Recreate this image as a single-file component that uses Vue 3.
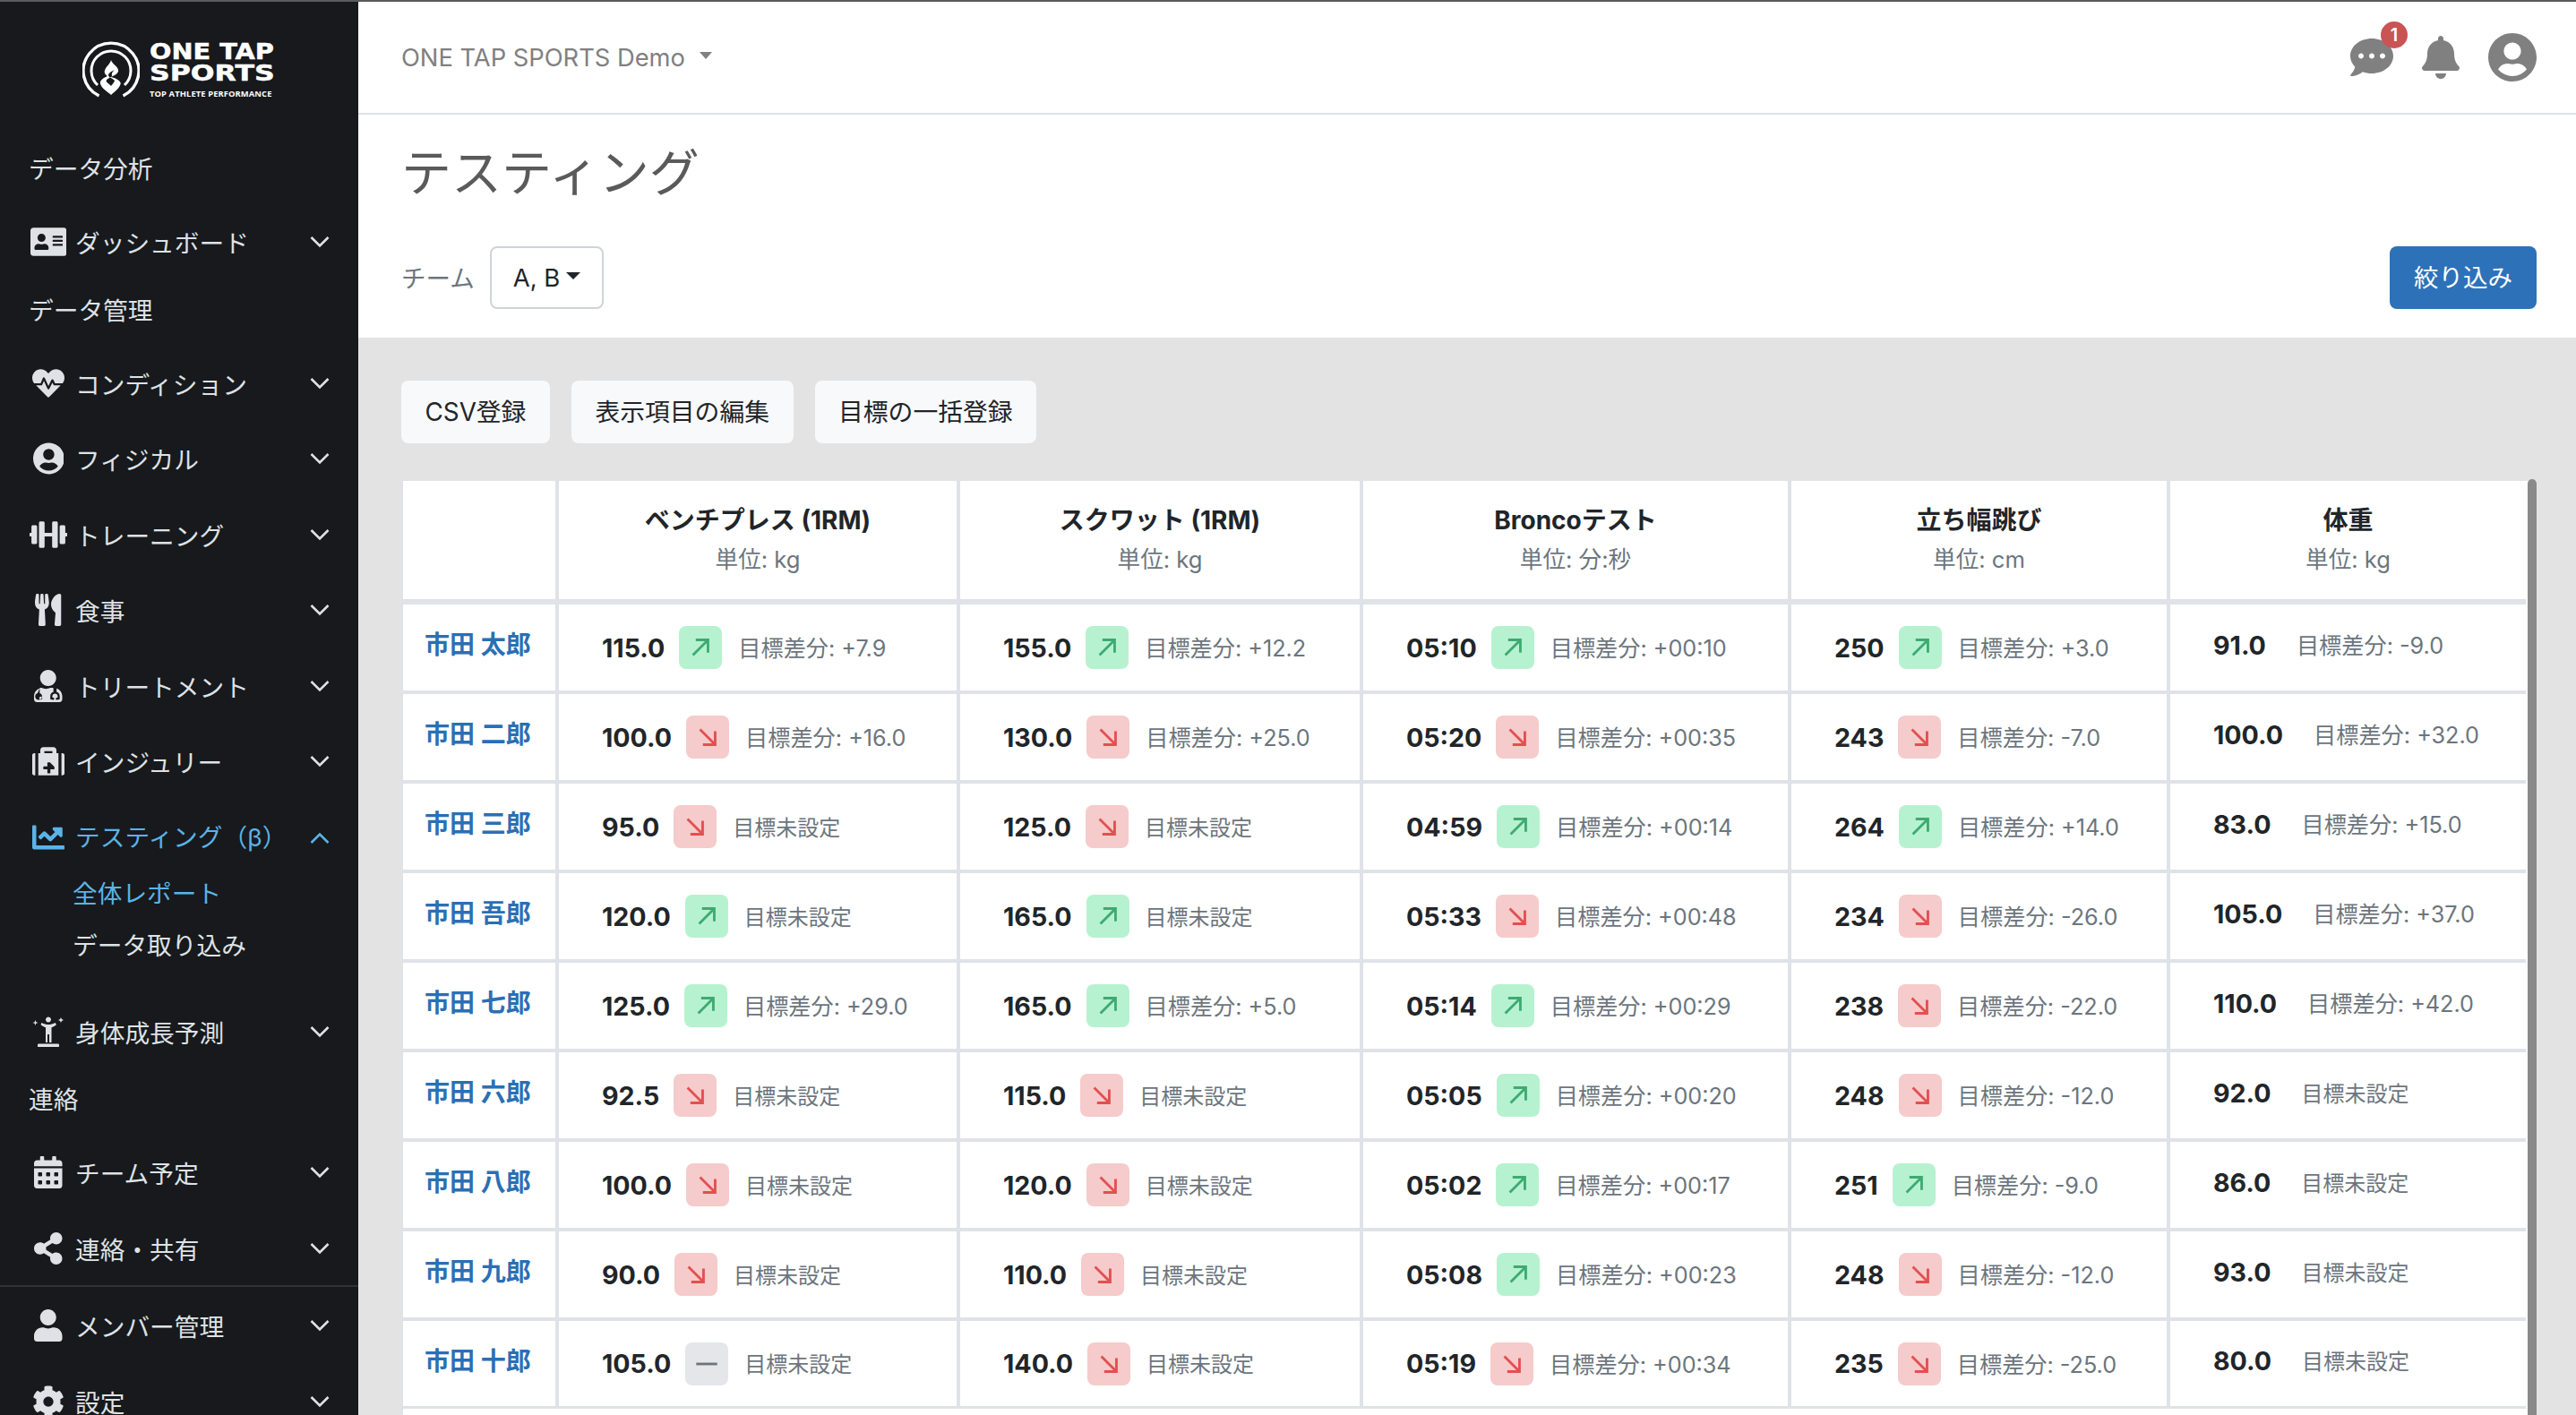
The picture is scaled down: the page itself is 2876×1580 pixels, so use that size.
<template>
  <div class="page">
    <aside class="sidebar">
      <div class="logo">
        <svg class="logo-mark" viewBox="0 0 64 64" width="64" height="64">
          <path d="M18.500 61A31 31 0 1 1 45.500 61" fill="none" stroke="#fff" stroke-width="3.400" />
          <path d="M17 49A22 22 0 1 1 47 49" fill="none" stroke="#fff" stroke-width="3" />
          <g transform="translate(32 0) scale(1.350 1) translate(-32 0)">
            <path d="M32 21c1 5 6 7 6 12 0 3-3 5-6 7 3 1 7 3 8 7-1 6-5 9-8 13-3-4-8-7-9-13 0-4 3-6 6-8-2-2-3-4-2-7 1-4 4-6 5-11z" fill="#fff" />
            <path d="M35 32c-3 2-6 4-5 7 1 2 4 3 5 5-1 3-2 4-3 6-1-2-3-3-4-5 0-3 3-4 5-6-1-2 0-5 2-7z" fill="#17191c" />
          </g>
        </svg>
        <div class="logo-text">
          <div class="logo-line">ONE TAP</div>
          <div class="logo-line sports">SPORTS</div>
          <div class="logo-tag">TOP ATHLETE PERFORMANCE</div>
        </div>
      </div>
      <nav class="nav">
        <template v-for="item in nav" :key="item.label">
          <div v-if="item.section" class="section">{{ item.label }}</div>
          <div v-else class="nav-item" :class="{ open: item.open, last: item.last }">
            <span class="nav-icon">
              <svg :viewBox="icons[item.icon].box" height="36" :width="36 * icons[item.icon].w">
                <path :d="icons[item.icon].d" fill="currentColor" fill-rule="evenodd" />
              </svg>
            </span>
            <span class="nav-label">{{ item.label }}</span>
            <svg class="chev" viewBox="0 0 22 14" width="22" height="14">
              <path :d="item.open ? 'M1.5 12L11 2.5 20.500 12' : 'M1.5 2L11 11.500 20.500 2'" fill="none" stroke="currentColor" stroke-width="2.600" />
            </svg>
          </div>
          <div v-if="item.open" class="sub">
            <div class="sub-item active">全体レポート</div>
            <div class="sub-item">データ取り込み</div>
          </div>
          <div v-if="item.last" class="divider"></div>
        </template>
      </nav>
    </aside>

    <main class="main">
      <header class="topbar">
        <div class="org">ONE TAP SPORTS Demo<i class="org-caret"></i></div>
        <div class="top-icons">
          <span class="chat">
            <svg viewBox="0 0 512 512" width="48" height="48"><path :d="chatPath" fill="#808080" /></svg>
            <b class="badge">1</b>
          </span>
          <svg viewBox="0 0 448 512" width="42" height="48"><path :d="bellPath" fill="#808080" /></svg>
          <svg viewBox="0 0 496 512" width="54" height="56"><path :d="icons.userCircle.d" fill="#808080" /></svg>
        </div>
      </header>

      <section class="head">
        <h1 class="title">テスティング</h1>
        <div class="filter">
          <span class="filter-label">チーム</span>
          <span class="toggle">A, B<i class="toggle-caret"></i></span>
          <span class="primary">絞り込み</span>
        </div>
      </section>

      <section class="content">
        <div class="actions">
          <span class="btn">CSV登録</span>
          <span class="btn">表示項目の編集</span>
          <span class="btn">目標の一括登録</span>
        </div>
        <div class="table-wrap">
          <table class="grid">
            <colgroup>
              <col class="c0" /><col class="c1" /><col class="c2" /><col class="c3" /><col class="c4" /><col class="c5" />
            </colgroup>
            <thead>
              <tr>
                <th></th>
                <th v-for="h in headers" :key="h.title">
                  <div class="h-title">{{ h.title }}</div>
                  <div class="h-unit">{{ h.unit }}</div>
                </th>
              </tr>
            </thead>
            <tbody>
              <tr v-for="row in rows" :key="row.name">
                <td class="name-cell"><span class="name">{{ row.name }}</span></td>
                <td v-for="(c, i) in row.cells" :key="i">
                  <div class="cell" :class="{ plain: !c[1] }">
                    <span class="val">{{ c[0] }}</span>
                    <span v-if="c[1]" class="trend" :class="c[1]">
                      <svg viewBox="0 0 20 20" width="26" height="26">
                        <path :d="arrows[c[1]]" fill="none" stroke="currentColor" stroke-width="2.200" />
                      </svg>
                    </span>
                    <span class="diff" :class="{ num: c[2] }">{{ c[2] ? '目標差分: ' + c[2] : '目標未設定' }}</span>
                  </div>
                </td>
              </tr>
            </tbody>
          </table>
          <div class="thumb"></div>
        </div>
      </section>
    </main>
  </div>
</template>

<script setup>
const icons = {
  card: { box: '0 0 576 512', w: 1.125, d: 'M528 32H48C21.5 32 0 53.5 0 80v352c0 26.5 21.5 48 48 48h480c26.5 0 48-21.5 48-48V80c0-26.5-21.5-48-48-48zm-352 96c35.3 0 64 28.7 64 64s-28.7 64-64 64-64-28.7-64-64 28.7-64 64-64zm112 236.8c0 10.6-10 19.2-22.4 19.2H86.4C74 384 64 375.4 64 364.8v-19.2c0-31.8 30.1-57.6 67.2-57.6h5c12.3 5.1 25.7 8 39.8 8s27.6-2.9 39.8-8h5c37.1 0 67.2 25.8 67.2 57.6v19.2zM512 312c0 4.4-3.6 8-8 8H360c-4.4 0-8-3.6-8-8v-16c0-4.4 3.6-8 8-8h144c4.4 0 8 3.6 8 8v16zm0-64c0 4.4-3.6 8-8 8H360c-4.4 0-8-3.6-8-8v-16c0-4.4 3.6-8 8-8h144c4.4 0 8 3.6 8 8v16zm0-64c0 4.4-3.6 8-8 8H360c-4.4 0-8-3.6-8-8v-16c0-4.4 3.6-8 8-8h144c4.4 0 8 3.6 8 8v16z' },
  heart: { box: '0 0 512 512', w: 1, d: 'M320.2 243.8l-49.7 99.4c-6 12.1-23.4 11.7-28.9-.6l-56.9-126.3-30 71.7H60.6l182.5 186.5c7.1 7.3 18.6 7.3 25.7 0L451.4 288H342.3l-22.1-44.2zM473.7 73.9l-2.4-2.5c-51.5-52.6-135.8-52.6-187.4 0L256 100l-27.9-28.5c-51.5-52.7-135.9-52.7-187.4 0l-2.4 2.4C-10.4 123.7-12.5 203 31 256h102.4l35.9-86.2c5.4-12.9 23.6-13.2 29.4-.4l58.2 129.3 49-97.9c5.9-11.8 22.7-11.8 28.6 0l27.6 55.2H481c43.5-53 41.4-132.3-7.3-182.1z' },
  userCircle: { box: '0 0 496 512', w: 0.969, d: 'M248 8C111 8 0 119 0 256s111 248 248 248 248-111 248-248S385 8 248 8zm0 96c48.6 0 88 39.4 88 88s-39.4 88-88 88-88-39.4-88-88 39.4-88 88-88zm0 344c-58.7 0-111.3-26.6-146.5-68.2 18.8-35.4 55.6-59.8 98.5-59.8 2.4 0 4.8.4 7.1 1.1 13 4.2 26.6 6.9 40.9 6.9 14.3 0 28-2.7 40.9-6.9 2.3-.7 4.7-1.1 7.1-1.1 42.9 0 79.7 24.4 98.5 59.8C359.3 421.4 306.7 448 248 448z' },
  dumbbell: { box: '0 0 640 512', w: 1.25, d: 'M104 96H56c-13.3 0-24 10.7-24 24v104H8c-4.4 0-8 3.6-8 8v48c0 4.4 3.6 8 8 8h24v104c0 13.3 10.7 24 24 24h48c13.3 0 24-10.7 24-24V120c0-13.3-10.7-24-24-24zm528 128h-24V120c0-13.3-10.7-24-24-24h-48c-13.3 0-24 10.7-24 24v272c0 13.3 10.7 24 24 24h48c13.3 0 24-10.7 24-24V288h24c4.4 0 8-3.6 8-8v-48c0-4.4-3.600-8-8-8zM456 32h-48c-13.3 0-24 10.7-24 24v168H256V56c0-13.3-10.7-24-24-24h-48c-13.3 0-24 10.7-24 24v400c0 13.3 10.7 24 24 24h48c13.3 0 24-10.7 24-24V288h128v168c0 13.3 10.7 24 24 24h48c13.3 0 24-10.7 24-24V56c0-13.3-10.7-24-24-24z' },
  utensils: { box: '0 0 416 512', w: 0.8125, d: 'M207.9 15.2c.8 4.7 16.1 94.5 16.1 128.8 0 52.3-27.8 89.6-68.9 104.6L168 486.7c.7 13.7-10.2 25.3-24 25.3H80c-13.7 0-24.7-11.5-24-25.3l12.9-238.1C27.7 233.6 0 196.2 0 144 0 109.6 15.3 19.9 16.1 15.2 19.3-5.1 61.4-5.4 64 16.3v141.2c1.3 3.4 15.1 3.2 16 0 1.4-25.3 7.9-139.2 8-141.8 3.3-20.8 44.7-20.8 47.9 0 .2 2.7 6.6 116.5 8 141.8.9 3.2 14.8 3.4 16 0V16.3c2.6-21.6 44.8-21.4 48-1.1zm119.2 285.7l-15 185.1c-1.2 14 9.9 26 23.9 26h56c13.3 0 24-10.7 24-24V24c0-13.2-10.7-24-24-24-82.5 0-221.4 178.5-64.9 300.9z' },
  doctor: { box: '0 0 448 512', w: 0.875, d: 'M224 256c70.7 0 128-57.3 128-128S294.7 0 224 0 96 57.3 96 128s57.3 128 128 128zM90 295C36 314 0 362 0 420v44c0 26.500 21.500 48 48 48h352c26.500 0 48-21.500 48-48v-44c0-58-36-106-90-125v52c30 10 50 37 50 70v40c0 7-5 13-12 14l-34 6c-8 1-12-4-13-9l-3-14c-1-6 2-10 7-11l22-4v-22c0-52-84-52-84 1v21l22 4c5 1 8 5 7 11l-3 14c-1 5-5 10-13 9l-34-6c-7-1-12-7-12-14v-40c0-33 21-60 50-70v-58c-12-3-20-4-31-4h-16c-22 10-46 16-72 16s-50-6-72-16h-16c-4 0-7 0-11 1v85c22 7 38 27 38 52 0 30-25 54-55 54s-55-24-55-54c0-25 16-45 38-52zM107 424a24 24 0 1 0 .01 0z' },
  medkit: { box: '0 0 512 512', w: 1, d: 'M96 480h320V128h-32V80c0-26.51-21.49-48-48-48H176c-26.51 0-48 21.49-48 48v48H96v352zm96-384h128v32H192V96zm160 248v32c0 4.422-3.578 8-8 8h-56v56c0 4.422-3.578 8-8 8h-32c-4.422 0-8-3.578-8-8v-56h-56c-4.422 0-8-3.578-8-8v-32c0-4.422 3.578-8 8-8h56v-56c0-4.422 3.578-8 8-8h32c4.422 0 8 3.578 8 8zM512 160v288c0 17.673-14.327 32-32 32h-16V128h16c17.673 0 32 14.327 32 32zM48 480H32c-17.673 0-32-14.327-32-32V160c0-17.673 14.327-32 32-32h16v352z' },
  chart: { box: '0 0 512 512', w: 1, d: 'M496 384H64V80c0-8.84-7.16-16-16-16H16C7.16 64 0 71.16 0 80v336c0 17.67 14.33 32 32 32h464c8.84 0 16-7.16 16-16v-32c0-8.84-7.16-16-16-16zM464 96H345.94c-21.38 0-32.09 25.85-16.97 40.97l32.4 32.4L288 242.75l-73.37-73.37c-12.5-12.5-32.76-12.5-45.25 0l-68.69 68.69c-6.25 6.25-6.25 16.38 0 22.63l22.62 22.62c6.25 6.25 16.38 6.25 22.63 0L192 237.25l73.37 73.37c12.5 12.5 32.76 12.5 45.25 0l96-96 32.4 32.4c15.12 15.12 40.97 4.41 40.97-16.97V112c.01-8.84-7.15-16-16-16z' },
  growth: { box: '0 0 36 36', w: 1, d: 'M18 1.500a3 3 0 1 1-.01 0zM10.500 8c2.500 1.500 5 2 7.500 2s5-.5 7.500-2l1.500 2c-1.800 1.700-3.500 2.700-5.500 3.200V30h-2.500v-9h-2v9H15V13.200c-2-.5-3.700-1.500-5.500-3.200zM7 31.500h22c1 0 1 1 1 2s0 1.500-1 1.500H7c-1 0-1-.5-1-1.500s0-2 1-2zM3.500 5l.8 2.200L6.500 8l-2.200.8-.8 2.200-.8-2.200L.5 8l2.200-.8zM32 2l.9 2.100L35 5l-2.100.9L32 8l-.9-2.100L29 5l2.100-.9z' },
  calendar: { box: '0 0 448 512', w: 0.875, d: 'M0 464c0 26.5 21.5 48 48 48h352c26.5 0 48-21.5 48-48V192H0v272zm320-196c0-6.6 5.4-12 12-12h40c6.6 0 12 5.4 12 12v40c0 6.6-5.4 12-12 12h-40c-6.6 0-12-5.4-12-12v-40zm0 128c0-6.6 5.4-12 12-12h40c6.6 0 12 5.4 12 12v40c0 6.6-5.4 12-12 12h-40c-6.6 0-12-5.4-12-12v-40zM192 268c0-6.6 5.4-12 12-12h40c6.6 0 12 5.4 12 12v40c0 6.6-5.4 12-12 12h-40c-6.6 0-12-5.4-12-12v-40zm0 128c0-6.6 5.4-12 12-12h40c6.6 0 12 5.4 12 12v40c0 6.6-5.4 12-12 12h-40c-6.6 0-12-5.4-12-12v-40zM64 268c0-6.6 5.4-12 12-12h40c6.6 0 12 5.4 12 12v40c0 6.6-5.4 12-12 12H76c-6.6 0-12-5.4-12-12v-40zm0 128c0-6.6 5.4-12 12-12h40c6.6 0 12 5.4 12 12v40c0 6.6-5.4 12-12 12H76c-6.6 0-12-5.4-12-12v-40zM400 64h-48V16c0-8.8-7.2-16-16-16h-32c-8.8 0-16 7.2-16 16v48H160V16c0-8.8-7.2-16-16-16h-32c-8.8 0-16 7.2-16 16v48H48C21.5 64 0 85.5 0 112v48h448v-48c0-26.5-21.5-48-48-48z' },
  share: { box: '0 0 448 512', w: 0.875, d: 'M352 320c-22.608 0-43.387 7.819-59.79 20.895l-102.486-64.054a96.551 96.551 0 0 0 0-41.683l102.486-64.054C308.613 184.181 329.392 192 352 192c53.019 0 96-42.981 96-96S405.019 0 352 0s-96 42.981-96 96c0 7.158.79 14.13 2.276 20.841L155.79 180.895C139.387 167.819 118.608 160 96 160c-53.019 0-96 42.981-96 96s42.981 96 96 96c22.608 0 43.387-7.819 59.79-20.895l102.486 64.054A96.301 96.301 0 0 0 256 416c0 53.019 42.981 96 96 96s96-42.981 96-96-42.981-96-96-96z' },
  user: { box: '0 0 448 512', w: 0.875, d: 'M224 256c70.7 0 128-57.3 128-128S294.7 0 224 0 96 57.3 96 128s57.3 128 128 128zm89.6 32h-16.7c-22.2 10.2-46.9 16-72.9 16s-50.6-5.8-72.9-16h-16.7C60.2 288 0 348.2 0 422.4V464c0 26.5 21.5 48 48 48h352c26.5 0 48-21.5 48-48v-41.6c0-74.2-60.2-134.4-134.4-134.4z' },
  cog: { box: '0 0 512 512', w: 1, d: 'M487.4 315.7l-42.6-24.6c4.3-23.2 4.3-47 0-70.2l42.6-24.6c4.9-2.8 7.1-8.6 5.5-14-11.1-35.6-30-67.8-54.7-94.6-3.8-4.1-10-5.1-14.8-2.3L380.8 110c-17.9-15.4-38.5-27.3-60.8-35.1V25.8c0-5.6-3.9-10.5-9.4-11.7-36.7-8.2-74.3-7.8-109.2 0-5.5 1.2-9.4 6.1-9.4 11.7V75c-22.2 7.9-42.8 19.8-60.8 35.1L88.7 85.5c-4.9-2.8-11-1.9-14.8 2.3-24.7 26.7-43.6 58.9-54.7 94.6-1.7 5.4.6 11.2 5.5 14L67.3 221c-4.3 23.2-4.3 47 0 70.2l-42.6 24.6c-4.9 2.8-7.1 8.6-5.5 14 11.1 35.6 30 67.8 54.7 94.6 3.8 4.1 10 5.1 14.8 2.3l42.6-24.6c17.9 15.4 38.5 27.3 60.8 35.1v49.2c0 5.6 3.9 10.5 9.4 11.7 36.7 8.2 74.3 7.8 109.2 0 5.5-1.2 9.4-6.1 9.4-11.7v-49.2c22.2-7.9 42.8-19.8 60.8-35.1l42.6 24.6c4.9 2.8 11 1.9 14.8-2.3 24.7-26.7 43.6-58.9 54.7-94.6 1.5-5.5-.7-11.3-5.6-14.1zM256 336c-44.1 0-80-35.9-80-80s35.9-80 80-80 80 35.9 80 80-35.9 80-80 80z' }
}

const chatPath = 'M256 32C114.6 32 0 125.1 0 240c0 49.6 21.4 95 57 130.7C44.5 421.1 2.7 466 2.2 466.5c-2.2 2.3-2.8 5.7-1.5 8.7S4.8 480 8 480c66.3 0 116-31.8 140.6-51.4 32.7 12.3 69 19.4 107.4 19.4 141.4 0 256-93.1 256-208S397.4 32 256 32zM128 272c-17.7 0-32-14.3-32-32s14.3-32 32-32 32 14.3 32 32-14.3 32-32 32zm128 0c-17.7 0-32-14.3-32-32s14.3-32 32-32 32 14.3 32 32-14.3 32-32 32zm128 0c-17.7 0-32-14.3-32-32s14.3-32 32-32 32 14.3 32 32-14.3 32-32 32z'
const bellPath = 'M224 512c35.32 0 63.97-28.65 63.97-64H160.03c0 35.35 28.65 64 63.97 64zm215.39-149.71c-19.32-20.76-55.47-51.99-55.47-154.29 0-77.7-54.48-139.9-127.94-155.16V32c0-17.67-14.32-32-31.98-32s-31.98 14.33-31.98 32v20.84C118.56 68.1 64.08 130.3 64.08 208c0 102.3-36.15 133.53-55.47 154.29-6 6.45-8.66 14.16-8.61 21.71.11 16.4 12.98 32 32.1 32h383.8c19.12 0 32-15.6 32.1-32 .05-7.55-2.61-15.27-8.61-21.71z'

const arrows = {
  up: 'M3.500 16.500L16 4M6 3.500h10.500v11',
  down: 'M3.500 3.500L16 16M16.500 5v11.500H6',
  flat: 'M1 10h18'
}

const nav = [
  { section: true, label: 'データ分析' },
  { label: 'ダッシュボード', icon: 'card' },
  { section: true, label: 'データ管理' },
  { label: 'コンディション', icon: 'heart' },
  { label: 'フィジカル', icon: 'userCircle' },
  { label: 'トレーニング', icon: 'dumbbell' },
  { label: '食事', icon: 'utensils' },
  { label: 'トリートメント', icon: 'doctor' },
  { label: 'インジュリー', icon: 'medkit' },
  { label: 'テスティング（β）', icon: 'chart', open: true },
  { label: '身体成長予測', icon: 'growth' },
  { section: true, label: '連絡' },
  { label: 'チーム予定', icon: 'calendar' },
  { label: '連絡・共有', icon: 'share', last: true },
  { label: 'メンバー管理', icon: 'user' },
  { label: '設定', icon: 'cog' }
]

const headers = [
  { title: 'ベンチプレス (1RM)', unit: '単位: kg' },
  { title: 'スクワット (1RM)', unit: '単位: kg' },
  { title: 'Broncoテスト', unit: '単位: 分:秒' },
  { title: '立ち幅跳び', unit: '単位: cm' },
  { title: '体重', unit: '単位: kg' }
]

const rows = [
  { name: '市田 太郎', cells: [['115.0', 'up', '+7.9'], ['155.0', 'up', '+12.2'], ['05:10', 'up', '+00:10'], ['250', 'up', '+3.0'], ['91.0', '', '-9.0']] },
  { name: '市田 二郎', cells: [['100.0', 'down', '+16.0'], ['130.0', 'down', '+25.0'], ['05:20', 'down', '+00:35'], ['243', 'down', '-7.0'], ['100.0', '', '+32.0']] },
  { name: '市田 三郎', cells: [['95.0', 'down', ''], ['125.0', 'down', ''], ['04:59', 'up', '+00:14'], ['264', 'up', '+14.0'], ['83.0', '', '+15.0']] },
  { name: '市田 吾郎', cells: [['120.0', 'up', ''], ['165.0', 'up', ''], ['05:33', 'down', '+00:48'], ['234', 'down', '-26.0'], ['105.0', '', '+37.0']] },
  { name: '市田 七郎', cells: [['125.0', 'up', '+29.0'], ['165.0', 'up', '+5.0'], ['05:14', 'up', '+00:29'], ['238', 'down', '-22.0'], ['110.0', '', '+42.0']] },
  { name: '市田 六郎', cells: [['92.5', 'down', ''], ['115.0', 'down', ''], ['05:05', 'up', '+00:20'], ['248', 'down', '-12.0'], ['92.0', '', '']] },
  { name: '市田 八郎', cells: [['100.0', 'down', ''], ['120.0', 'down', ''], ['05:02', 'up', '+00:17'], ['251', 'up', '-9.0'], ['86.0', '', '']] },
  { name: '市田 九郎', cells: [['90.0', 'down', ''], ['110.0', 'down', ''], ['05:08', 'up', '+00:23'], ['248', 'down', '-12.0'], ['93.0', '', '']] },
  { name: '市田 十郎', cells: [['105.0', 'flat', ''], ['140.0', 'down', ''], ['05:19', 'down', '+00:34'], ['235', 'down', '-25.0'], ['80.0', '', '']] }
]
</script>

<style>
html, body { margin: 0; background: #e3e3e3; }
</style>

<style scoped>
.page {
  display: flex;
  width: 2876px;
  height: 1580px;
  overflow: hidden;
  border-top: 2px solid #5a5a5e;
  box-sizing: border-box;
  font-family: Inter, "Noto Sans CJK JP", sans-serif;
  font-size: 27.5px;
  color: #212529;
}

/* sidebar */
.sidebar {
  width: 400px;
  flex: none;
  background: #17191c;
  color: #dee2e6;
  font-size: 27.7px;
}
.logo {
  height: 153px;
  padding: 44px 0 0 92px;
  box-sizing: border-box;
  display: flex;
  gap: 11px;
  color: #fff;
}
.logo-mark { flex: none; }
.logo-text {
  width: 142px;
  font-family: "DejaVu Sans", sans-serif;
  font-weight: 700;
}
.logo-line {
  font-size: 25px;
  line-height: 24px;
  white-space: nowrap;
  -webkit-text-stroke: 0.5px #fff;
  transform: scaleX(1.15);
  transform-origin: left center;
}
.logo-line.sports { transform: scaleX(1.26); }
.logo-tag {
  font-family: "Open Sans", sans-serif;
  font-size: 9.4px;
  line-height: 14px;
  margin-top: 4px;
  white-space: nowrap;
  letter-spacing: 0.1px;
}
.section {
  height: 66px;
  margin-bottom: 7px;
  padding-left: 32px;
  line-height: 68px;
}
.nav-item {
  height: 84.5px;
  display: flex;
  align-items: center;
  padding: 0 32px 0 33px;
}
.nav-icon {
  width: 42px;
  flex: none;
  display: flex;
  justify-content: center;
  margin-right: 9px;
}
.nav-label { flex: 1; white-space: nowrap; }
.chev { flex: none; }
.nav-item.open {
  height: 73px;
  align-items: flex-start;
  color: #5bb3e6;
}
.nav-item.open .nav-icon,
.nav-item.open .nav-label { margin-top: 24px; }
.nav-item.open .nav-label { line-height: 36px; }
.nav-item.open .chev { margin-top: 36px; }
.sub { padding: 3px 0 25px 81px; }
.sub-item { height: 58px; line-height: 58px; }
.sub-item.active { color: #5bb3e6; }
.divider {
  height: 2px;
  margin: -1px 0 1px;
  background: #2d3339;
}

/* top bar */
.main {
  flex: 1;
  min-width: 0;
  display: flex;
  flex-direction: column;
  background: #fff;
}
.topbar {
  height: 126px;
  flex: none;
  box-sizing: border-box;
  border-bottom: 2px solid #dee2e6;
  display: flex;
  align-items: center;
  justify-content: space-between;
  padding: 0 44px 0 48px;
}
.org {
  color: #808080;
  font-size: 27.3px;
  display: flex;
  align-items: center;
}
.org-caret {
  margin: -4px 0 0 16px;
  border-top: 8px solid #808080;
  border-left: 7px solid transparent;
  border-right: 7px solid transparent;
}
.top-icons {
  display: flex;
  align-items: center;
  gap: 32px;
}
.chat { position: relative; display: flex; }
.badge {
  position: absolute;
  top: -16px;
  right: -16px;
  width: 30px;
  height: 30px;
  border-radius: 50%;
  background: #c85454;
  color: #fff;
  font-size: 20px;
  font-weight: 600;
  line-height: 30px;
  text-align: center;
}

/* page head */
.head {
  height: 249px;
  flex: none;
  padding: 0 44px 0 48px;
  box-sizing: border-box;
}
.title {
  margin: 0;
  height: 147px;
  font-size: 56px;
  font-weight: 400;
  line-height: 130px;
  color: #5a5a5a;
}
.filter {
  display: flex;
  align-items: center;
  height: 70px;
}
.filter-label { color: #6c757d; margin: -2px 17px 0 0; }
.toggle {
  height: 70px;
  box-sizing: border-box;
  border: 2px solid #ced4da;
  border-radius: 8px;
  padding: 0 24px;
  display: flex;
  align-items: center;
  white-space: nowrap;
}
.toggle-caret {
  margin: -4px 0 0 7px;
  border-top: 8px solid #212529;
  border-left: 8px solid transparent;
  border-right: 8px solid transparent;
}
.primary {
  margin-left: auto;
  width: 164px;
  height: 70px;
  border-radius: 8px;
  background: #2d72b8;
  color: #fff;
  line-height: 70px;
  text-align: center;
}

/* content */
.content {
  flex: 1;
  min-height: 0;
  background: #e3e3e3;
  padding: 48px 44px 0 48px;
}
.actions {
  display: flex;
  gap: 24px;
  margin-bottom: 42px;
}
.btn {
  height: 70px;
  line-height: 70px;
  padding: 0 26.5px;
  border-radius: 8px;
  background: #f8f9fa;
  font-size: 27.8px;
}
.table-wrap {
  position: relative;
  background: #fff;
  border-left: 2px solid #dfe2e7;
  height: 1060px;
}
.grid {
  width: 2370px;
  table-layout: fixed;
  border-collapse: separate;
  border-spacing: 0;
}
.c0 { width: 170px; }
.c1 { width: 448px; }
.c2 { width: 450px; }
.c3 { width: 478px; }
.c4 { width: 423px; }
.c5 { width: 401px; }
th, td {
  box-sizing: border-box;
  padding: 0;
  background: #fff;
  border-left: 4px solid #dfe2e7;
}
th:first-child, td:first-child { border-left: 0; }
th {
  height: 138px;
  border-bottom: 6px solid #dfe2e7;
  text-align: center;
}
td {
  height: 100px;
  border-bottom: 4px solid #dfe2e7;
}
tbody tr:last-child td { height: 98px; border-bottom-width: 3px; }
.h-title { font-size: 28px; font-weight: 700; line-height: 43px; }
.h-unit { font-size: 25.6px; font-weight: 400; color: #6c757d; line-height: 43px; }
.name-cell { padding: 0 0 10px 24px; }
.name {
  color: #2b6fb4;
  font-size: 28px;
  font-weight: 700;
  white-space: nowrap;
}
.cell {
  display: flex;
  align-items: center;
  padding-left: 48px;
  white-space: nowrap;
}
.cell.plain { padding-bottom: 6px; }
.val { font-size: 28.6px; font-weight: 700; }
.trend {
  width: 48px;
  height: 48px;
  margin: 0 18px 0 16px;
  border-radius: 8px;
  display: flex;
  align-items: center;
  justify-content: center;
}
.trend.up { background: #b7f2d0; color: #3eaa72; }
.trend.down { background: #f6cbcb; color: #e25050; }
.trend.flat { background: #e4e6ea; color: #6c757d; }
.diff { font-size: 24px; color: #6c757d; margin-bottom: 2px; }
.diff.num { font-size: 25.2px; }
.plain .diff { margin-left: 34px; }
.thumb {
  position: absolute;
  top: -2px;
  left: 2372px;
  width: 10px;
  bottom: 0;
  border-radius: 5px;
  background: #8a8a8a;
}
</style>
